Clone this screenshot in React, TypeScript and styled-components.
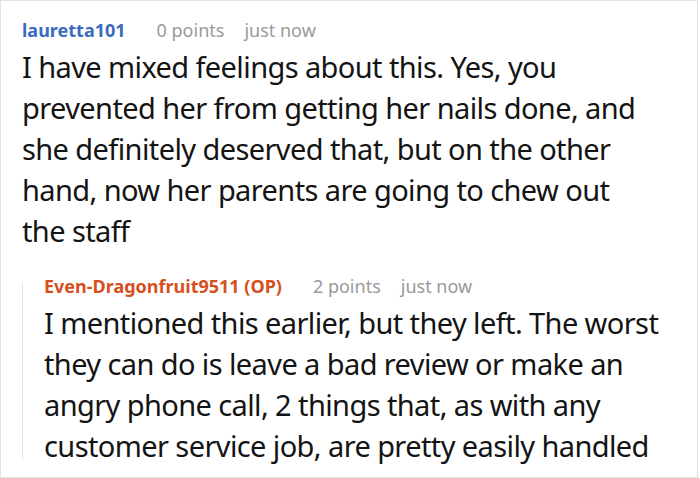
import styled, { createGlobalStyle } from 'styled-components';

const GlobalStyle = createGlobalStyle`
  html, body {
    margin: 0;
    padding: 0;
    background: #fff;
  }
  body {
    font-family: 'Noto Sans', 'Open Sans', sans-serif;
  }
`;

const Frame = styled.div`
  box-sizing: border-box;
  width: 698px;
  height: 478px;
  border: 1px solid #e2e2e2;
  padding: 15px 0 0 21px;
  overflow: hidden;
`;

const Comment = styled.div`
  display: flex;
  flex-direction: column;
`;

const Meta = styled.div`
  display: flex;
  align-items: baseline;
  font-size: 18px;
  line-height: 28px;
`;

const Author = styled.span<{ $op?: boolean }>`
  font-weight: 700;
  color: ${(p) => (p.$op ? '#d64f1e' : '#3a6bbd')};
  margin-right: 31px;
`;

const Info = styled.span`
  color: #9a9a9a;
  & + & {
    margin-left: 20px;
  }
`;

const Body = styled.p<{ $width: number }>`
  margin: 2px 0 0;
  width: ${(p) => p.$width}px;
  font-size: 29px;
  letter-spacing: -0.6px;
  line-height: 41px;
  color: #141414;
`;

const Reply = styled.div`
  display: flex;
  gap: 21px;
  margin-top: 21px;
`;

const Thread = styled.div`
  flex: none;
  width: 1px;
  margin: 11px 0 7px;
  background: #e2e2e2;
`;

export default function App() {
  return (
    <>
      <GlobalStyle />
      <Frame>
        <Comment>
          <Meta>
            <Author>lauretta101</Author>
            <Info>0 points</Info>
            <Info>just now</Info>
          </Meta>
          <Body $width={628}>
            I have mixed feelings about this. Yes, you prevented her from getting her nails done, and
            she definitely deserved that, but on the other hand, now her parents are going to chew out
            the staff
          </Body>
        </Comment>
        <Reply>
          <Thread />
          <Comment>
            <Meta>
              <Author $op>Even-Dragonfruit9511 (OP)</Author>
              <Info>2 points</Info>
              <Info>just now</Info>
            </Meta>
            <Body $width={636}>
              I mentioned this earlier, but they left. The worst they can do is leave a bad review or
              make an angry phone call, 2 things that, as with any customer service job, are pretty
              easily handled
            </Body>
          </Comment>
        </Reply>
      </Frame>
    </>
  );
}
